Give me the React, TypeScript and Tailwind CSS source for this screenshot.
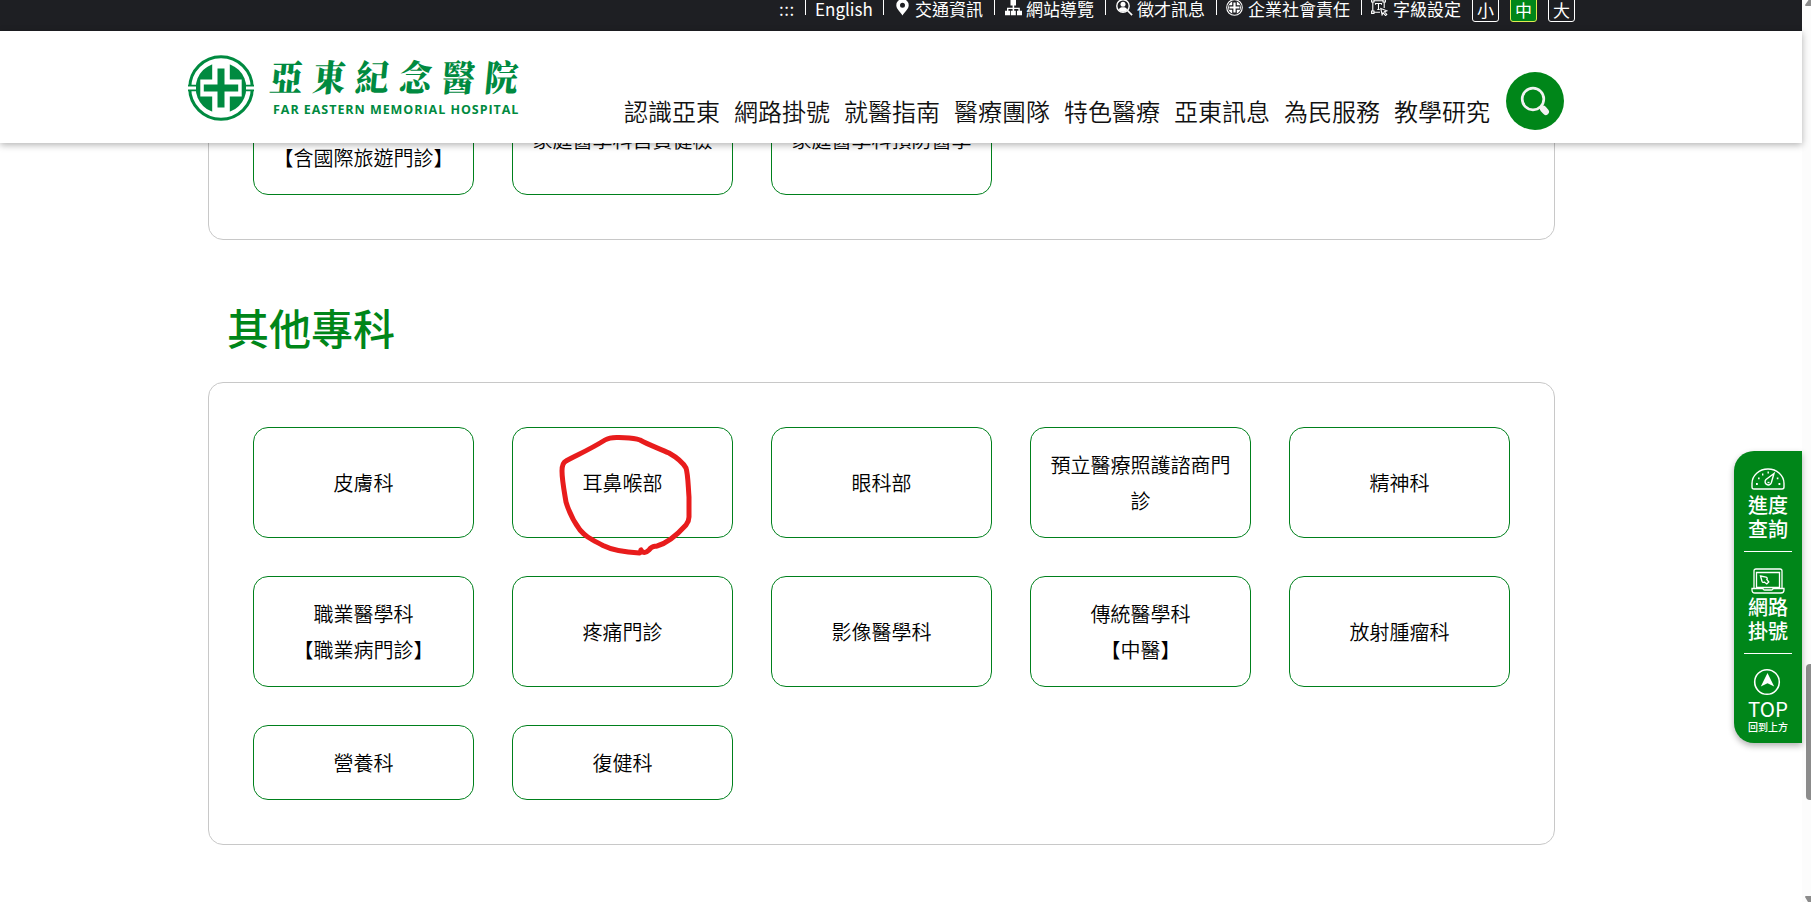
import React from "react";

type CardProps = { lines: string[] };

function Card({ lines }: CardProps) {
  return (
    <a className="flex flex-col items-center justify-center rounded-[15px] border border-[#00801c] bg-white px-[17px] py-[18.5px] text-center text-[20px] leading-[36px] font-[350] text-black">
      {lines.map((l) => (
        <span key={l}>{l}</span>
      ))}
    </a>
  );
}

function Panel({ items }: { items: string[][] }) {
  return (
    <div className="ml-[208px] w-[1347px] rounded-[15px] border border-[#c8c8c8] p-[44px]">
      <div className="grid grid-cols-5 gap-[38px]">
        {items.map((lines) => (
          <Card key={lines[0]} lines={lines} />
        ))}
      </div>
    </div>
  );
}

const clinics: string[][] = [
  ["皮膚科"],
  ["耳鼻喉部"],
  ["眼科部"],
  ["預立醫療照護諮商門診"],
  ["精神科"],
  ["職業醫學科", "【職業病門診】"],
  ["疼痛門診"],
  ["影像醫學科"],
  ["傳統醫學科", "【中醫】"],
  ["放射腫瘤科"],
  ["營養科"],
  ["復健科"],
];

const family: string[][] = [["家庭醫學科", "【含國際旅遊門診】"], ["家庭醫學科自費健檢"], ["家庭醫學科預防醫學"]];

const PinIcon = () => (
  <svg width="13" height="17" viewBox="0 0 13 17" fill="#fff">
    <path fillRule="evenodd" d="M6.5 0A6.2 6.2 0 0 0 .3 6.2C.3 10 4 12.500 6.500 16.500 9 12.500 12.700 10 12.700 6.200A6.200 6.200 0 0 0 6.500 0Zm0 3.700a2.500 2.500 0 1 1 0 5 2.500 2.500 0 0 1 0-5Z" />
  </svg>
);

const SitemapIcon = () => (
  <svg width="17" height="17" viewBox="0 0 17 17" fill="#fff">
    <path d="M5.500 1h5.500v5.500H9.200v2.200h5.600v3H17v4.600h-5v-4.600h1.400v-1.600H9.200v1.600h1.600v4.600h-5v-4.600h1.800v-1.600H3.400v1.600H5v4.600H0v-4.600h2v-3h5.600V6.500H5.500Z" />
  </svg>
);

const RecruitIcon = () => (
  <svg width="17" height="17" viewBox="0 0 17 17" fill="none" stroke="#fff">
    <circle cx="7" cy="7" r="6.200" strokeWidth="1.400" />
    <circle cx="7" cy="5.200" r="2.500" fill="#fff" stroke="none" />
    <path d="M2.800 11C3.200 8.800 5 8.300 7 8.300s3.800.500 4.200 2.700C9 13.400 5 13.400 2.800 11Z" fill="#fff" stroke="none" />
    <path d="m11.500 11.500 4.600 4.600" strokeWidth="1.700" />
  </svg>
);

const CsrIcon = () => (
  <svg width="17" height="17" viewBox="0 0 17 17" fill="none">
    <circle cx="8.500" cy="8.500" r="7.800" stroke="#fff" strokeWidth="1.100" />
    <circle cx="8.500" cy="8.500" r="6.400" fill="#fff" />
    <path d="M8.500 2v13M3 8.500h11" stroke="#1e1f23" strokeWidth="4.600" />
    <path d="M8.500 3.500v10M3.500 8.500h10" stroke="#fff" strokeWidth="2.200" />
  </svg>
);

const FontSizeIcon = () => (
  <svg width="17" height="17" viewBox="0 0 17 17" fill="none" stroke="#fff" strokeWidth="1.100">
    <path d="M3 1.800h9M1.800 3v9M13.200 3v6M3 13.200h6" />
    <path d="M.6.6H3V3H.6ZM12 .6h2.400V3H12ZM.6 12H3v2.400H.6Z" />
    <path d="M4.500 5.800V4.500h6v1.300M7.500 4.500v6M6.300 10.500h2.400" />
    <path d="m9.800 9.500 6 2.300-2.400 1 2.400 2.700-1.200 1-2.500-2.700-1 2Z" />
  </svg>
);

const utilLinks: { label: string; icon?: React.ReactNode; cls: string }[] = [
  { label: "English", cls: "ml-[9px] mr-[11px] w-[57px]" },
  { label: "交通資訊", icon: <PinIcon />, cls: "ml-[12px] mr-[11px] w-[87px]" },
  { label: "網站導覽", icon: <SitemapIcon />, cls: "ml-[10px] mr-[11px] w-[89px]" },
  { label: "徵才訊息", icon: <RecruitIcon />, cls: "ml-[10px] mr-[11px] w-[89px]" },
  { label: "企業社會責任", icon: <CsrIcon />, cls: "ml-[9px] mr-[11px] w-[124px]" },
  { label: "字級設定", icon: <FontSizeIcon />, cls: "ml-[9px] mr-[11px] w-[90px]" },
];

function UtilityBar() {
  return (
    <div className="flex h-[31px] items-start overflow-hidden bg-[#1e1f23] pl-[779px] text-[17px] leading-[18px] text-white">
      <span className="w-[26px] tracking-[0.5px]">:::</span>
      {utilLinks.map((u) => (
        <React.Fragment key={u.label}>
          <span className="h-[15px] w-px shrink-0 bg-white" />
          <a className={"flex shrink-0 items-start justify-between whitespace-nowrap " + u.cls}>
            {u.icon && <span className="-mt-px">{u.icon}</span>}
            <span>{u.label}</span>
          </a>
        </React.Fragment>
      ))}
      <div className="-mt-1 flex gap-[11px] leading-[25px]">
        <span className="h-[26px] w-[27px] rounded-[3px] border border-white text-center">小</span>
        <span className="h-[26px] w-[27px] rounded-[3px] border border-[#e0ec50] bg-[#008619] text-center">中</span>
        <span className="h-[26px] w-[27px] rounded-[3px] border border-white text-center">大</span>
      </div>
    </div>
  );
}

function LogoMark() {
  return (
    <svg width="66" height="66" viewBox="0 0 66 66" fill="none">
      <circle cx="33" cy="33" r="31.300" stroke="#008a40" strokeWidth="3" />
      <circle cx="33" cy="33" r="25.300" fill="#008a40" />
      <path d="M33 6v54" stroke="#fff" strokeWidth="17.600" />
      <path d="M12.300 33h41.400" stroke="#fff" strokeWidth="17" />
      <path d="M0 33h8M58 33h8" stroke="#008a40" strokeWidth="6.400" />
      <path d="M0 33h8M58 33h8" stroke="#fff" strokeWidth="3" />
      <path d="M33 13.500v39M15.800 33h34.400" stroke="#008a40" strokeWidth="7" />
    </svg>
  );
}

const menu = ["認識亞東", "網路掛號", "就醫指南", "醫療團隊", "特色醫療", "亞東訊息", "為民服務", "教學研究"];

function Header() {
  return (
    <header className="relative z-10">
      <UtilityBar />
      <div className="flex h-[112px] bg-white shadow-[0_2px_7px_rgba(0,0,0,0.3)]">
        <a className="ml-[188px] mt-[24px] flex text-[#008a40]">
          <LogoMark />
          <span className="ml-[16px] flex flex-col">
            <span className="flex h-[46px] w-[248px] justify-between font-['Noto_Serif_CJK_TC','Noto_Sans_CJK_TC',serif] text-[33px] leading-[42px] font-black">
              {"亞東紀念醫院".split("").map((c) => (
                <span key={c} className="inline-block scale-y-110 -skew-x-6">{c}</span>
              ))}
            </span>
            <span className="ml-[3px] whitespace-nowrap font-['Open_Sans'] text-[12.5px] leading-[17px] font-bold tracking-[0.96px]">FAR EASTERN MEMORIAL HOSPITAL</span>
          </span>
        </a>
        <nav className="ml-auto mt-[62px] flex gap-[14px] text-[24px] leading-[36px] font-[350] text-[#111]">
          {menu.map((m) => (
            <a key={m}>{m}</a>
          ))}
        </nav>
        <button className="ml-[16px] mr-[238px] mt-[41px] flex h-[58px] w-[58px] items-center justify-center rounded-full bg-[#008619]">
          <svg width="30" height="30" viewBox="0 0 30 30" fill="none" stroke="#f2f2f2">
            <circle cx="13" cy="13" r="10.800" strokeWidth="2.700" />
            <path d="m20.300 20.300 3 3" strokeWidth="3" />
            <path d="m23.300 23 2.400 2.700" strokeWidth="6.500" strokeLinecap="round" />
          </svg>
        </button>
      </div>
    </header>
  );
}

function SideMenu() {
  const row = "flex flex-col items-center";
  return (
    <aside className="absolute right-[9px] top-[451px] z-20 flex h-[292px] w-[68px] flex-col rounded-l-[20px] bg-[#008619] px-[10px] text-[20px] leading-[24px] font-medium text-white shadow-[0_3px_6px_rgba(0,0,0,0.3)]">
      <a className={row + " h-[101px] border-b border-white pt-[17px]"}>
        <svg width="34" height="22" viewBox="0 0 34 22" fill="none" stroke="#fff" strokeWidth="1.400">
          <path d="M1 15.500a16 14.500 0 0 1 32 0V19q0 2-2 2H3q-2 0-2-2Z" />
          <path d="m23 5.500-2.700 9.300a3.200 3.200 0 1 1-5.300-3.300Z" />
          <path d="M16.500 14.500h2" />
          <path d="M5 16h1.800M27.500 16h1.800M7 10.300h1.600M25.800 10.300h1.600M11 6.500h1.400M16.500 4.500h1.400" strokeWidth="1.800" />
        </svg>
        <span className="mt-[3px] w-[40px] text-center">進度查詢</span>
      </a>
      <a className={row + " h-[102px] border-b border-white pt-[16px]"}>
        <svg width="34" height="26" viewBox="0 0 34 26" fill="none" stroke="#fff" strokeWidth="1.300">
          <path d="M3 20V3q0-2 2-2h24q2 0 2 2v17M5.500 19.500V4.500h23v15Z" />
          <path d="M1 20.500h11q0 1.500 1.500 1.500h7q1.500 0 1.500-1.500h11V22q0 3-3 3H4q-3 0-3-3Z" />
          <path d="m9.500 8 5.500 1.200q2 .8.800 2.300l2 2.500-2 2-2.500-2q-1.500 1.200-2.300-.8Z" />
        </svg>
        <span className="mt-px w-[40px] text-center">網路掛號</span>
      </a>
      <a className={row + " pt-[14px]"}>
        <svg className="mr-[2px]" width="28" height="28" viewBox="0 0 28 28" fill="none">
          <circle cx="14" cy="14" r="12.300" stroke="#fff" strokeWidth="1.600" />
          <path d="m14.500 5 6.700 13.500-6.700-3.200-6.700 3.200Z" fill="#fff" />
        </svg>
        <span className="text-[20.5px] leading-[24px] font-normal">TOP</span>
        <span className="mt-px whitespace-nowrap text-[10px] leading-[12px]">回到上方</span>
      </a>
    </aside>
  );
}

export default function App() {
  return (
    <div className="relative h-[902px] w-[1811px] overflow-hidden bg-white font-['Noto_Sans_CJK_TC','Noto_Sans',sans-serif]">
      <div className="mr-[9px]">
        <Header />
        <main className="-mt-[104px]">
          <Panel items={family} />
          <h2 className="ml-[227px] h-[142px] pt-[57px] text-[42px] leading-[60px] font-medium text-[#008619]">其他專科</h2>
          <Panel items={clinics} />
        </main>
      </div>
      <div className="absolute right-0 top-0 flex h-full w-[9px] flex-col items-end overflow-hidden bg-[#fcfcfc]">
        <svg width="6" height="6" viewBox="0 0 6 6" fill="#8b8b8b">
          <path d="M0 5 3.500 0H6v6H1Q0 6 0 5Z" />
        </svg>
        <div className="mt-[658px] h-[136px] w-[5px] rounded-l-[4px] bg-[#8b8b8b]" />
        <svg className="mt-auto" width="6" height="6" viewBox="0 0 6 6" fill="#8b8b8b">
          <path d="M0 1q0-1 1-1h5v6H3Z" />
        </svg>
      </div>
      <svg className="pointer-events-none absolute left-[555px] top-[430px]" width="145" height="135" fill="none" stroke="#e81c1c" strokeWidth="5" strokeLinecap="round" strokeLinejoin="round">
        <path d="M84.500 123C65 122 55 119 48 115.500 36 109 31 107 25 100c-6-8-11-18-14-28C9 60 7 50 7 41q0-8 4-10C20 26 34 20 50 10q5-3 14-2.500C72 8 78 7.500 85 10c9 5 18 8 29 13 7 4 13 8 17 15 2 6 2 16 3 29v20q0 4-3 8c-9 10-18 18-29 21-4 .8-5 0-8 4q-5 5-8 0" />
      </svg>
      <SideMenu />
    </div>
  );
}
